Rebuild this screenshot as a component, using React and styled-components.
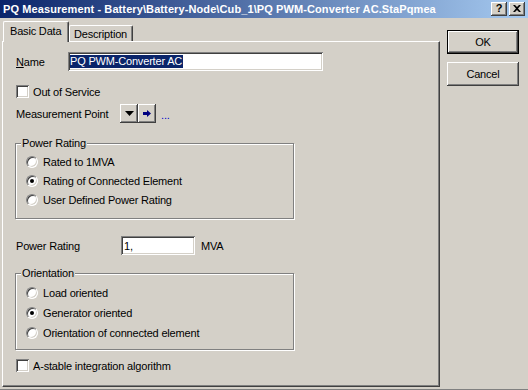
import React from "react";
import styled, { createGlobalStyle, css } from "styled-components";

const Global = createGlobalStyle`
  html, body { margin: 0; padding: 0; background: #d4d0c8; }
  body { font-family: "Liberation Sans", Arial, sans-serif; font-size: 11px; color: #000; letter-spacing: -0.18px; }
  * { box-sizing: border-box; }
`;

const raised = css`
  box-shadow: inset -1px -1px #404040, inset 1px 1px #fff, inset -2px -2px #808080, inset 2px 2px #d4d0c8;
`;
const sunken = css`
  box-shadow: inset 1px 1px #808080, inset -1px -1px #fff, inset 2px 2px #404040, inset -2px -2px #d4d0c8;
`;

const Window = styled.div`
  width: 528px;
  height: 390px;
  background: #d4d0c8;
  border-bottom: 1px solid #808080;
  display: flex;
  flex-direction: column;
  overflow: hidden;
`;

const TitleBar = styled.div`
  height: 18px;
  flex: none;
  background: linear-gradient(to right, #0a246a, #a6caf0);
  display: flex;
  align-items: center;
  justify-content: space-between;
  padding: 0 3px 0 3px;
`;

const Title = styled.span`
  color: #fff;
  font-weight: bold;
  font-size: 11px;
  white-space: nowrap;
  letter-spacing: 0.1px;
`;

const TitleButtons = styled.div`
  display: flex;
  gap: 2px;
`;

const TitleButton = styled.div`
  width: 16px;
  height: 14px;
  background: #d4d0c8;
  ${raised};
  display: flex;
  align-items: center;
  justify-content: center;
  font-weight: bold;
  font-size: 11px;
  line-height: 1;
  color: #000;
  padding-bottom: 1px;
`;

const Body = styled.div`
  flex: 1;
  display: flex;
  padding: 3px 0 0 2px;
`;

const LeftCol = styled.div`
  width: 438px;
  display: flex;
  flex-direction: column;
`;

const TabRow = styled.div`
  height: 20px;
  display: flex;
  align-items: flex-end;
  padding-left: 1px;
`;

const Tab = styled.div`
  position: relative;
  background: #d4d0c8;
  border-top: 1px solid #fff;
  border-left: 1px solid #fff;
  border-right: 1px solid #404040;
  border-top-left-radius: 2px;
  border-top-right-radius: 2px;
  box-shadow: inset -1px 0 #808080;
  display: flex;
  align-items: center;
  white-space: nowrap;
  ${(p) =>
    p.$active
      ? css`
          height: 21px;
          margin-bottom: -1px;
          z-index: 1;
          width: 66px;
          padding: 0 0 2px 6px;
        `
      : css`
          height: 16px;
          width: 64px;
          padding: 1px 0 0 4px;
        `}
`;

const Panel = styled.div`
  height: 346px;
  border-top: 1px solid #fff;
  border-left: 1px solid #fff;
  border-right: 1px solid #404040;
  border-bottom: 1px solid #404040;
  box-shadow: inset -1px -1px #808080;
  display: flex;
  flex-direction: column;
  padding: 10px 0 0 12px;
`;

const Row = styled.div`
  display: flex;
  align-items: center;
  height: ${(p) => p.$h || 14}px;
  margin-top: ${(p) => p.$mt || 0}px;
  padding-left: 1px;
`;

const Label = styled.span`
  width: ${(p) => p.$w}px;
  flex: none;
  white-space: nowrap;
`;

const Field = styled.div`
  height: 19px;
  width: ${(p) => p.$w}px;
  background: #fff;
  ${sunken};
  display: flex;
  align-items: center;
  padding-left: 2px;
  white-space: nowrap;
`;

const Selected = styled.span`
  background: #0a246a;
  color: #fff;
  line-height: 13px;
  padding: 0 1px 0 0;
`;

const FieldText = styled.span`
  padding-left: 1px;
`;

const CheckBox = styled.div`
  width: 13px;
  height: 13px;
  flex: none;
  background: #fff;
  ${sunken};
  margin-right: 4px;
`;

const SmallBtn = styled.div`
  width: 18px;
  height: 19px;
  background: #d4d0c8;
  ${raised};
  display: flex;
  align-items: center;
  justify-content: center;
`;

const Dots = styled.span`
  color: #0000cc;
  margin-left: 5px;
  padding-top: 2px;
`;

const Group = styled.div`
  position: relative;
  width: 279px;
  height: ${(p) => p.$h}px;
  margin-top: ${(p) => p.$mt}px;
  border: 1px solid #808080;
  box-shadow: inset 1px 1px 0 #fff, 1px 1px 0 #fff;
  display: flex;
  flex-direction: column;
  padding: ${(p) => p.$pt}px 0 0 10px;
  gap: ${(p) => p.$gap}px;
`;

const Legend = styled.span`
  position: absolute;
  top: -7px;
  left: 5px;
  background: #d4d0c8;
  padding: 0 1px;
  line-height: 13px;
`;

const RadioRow = styled.div`
  display: flex;
  align-items: center;
  height: 13px;
`;

const Radio = styled.div`
  width: 12px;
  height: 12px;
  flex: none;
  border-radius: 50%;
  background: #fff;
  border: 1px solid;
  border-color: #808080 #fff #fff #808080;
  box-shadow: inset 1px 1px #404040, inset -1px -1px #d4d0c8;
  margin-right: 5px;
  display: flex;
  align-items: center;
  justify-content: center;
  &::after {
    content: "";
    display: ${(p) => (p.$on ? "block" : "none")};
    width: 4px;
    height: 4px;
    border-radius: 50%;
    background: #000;
  }
`;

const Unit = styled.span`
  margin-left: 6px;
`;

const RightCol = styled.div`
  display: flex;
  flex-direction: column;
  gap: 8px;
  padding: 9px 0 0 7px;
`;

const Button = styled.div`
  width: 72px;
  height: 24px;
  background: #d4d0c8;
  display: flex;
  align-items: center;
  justify-content: center;
  ${(p) =>
    p.$default
      ? css`
          border: 1px solid #000;
          box-shadow: inset -1px -1px #404040, inset 1px 1px #fff, inset -2px -2px #808080;
        `
      : raised};
`;

const Accel = styled.span`
  text-decoration: underline;
`;

export default function App() {
  return (
    <>
      <Global />
      <Window>
        <TitleBar>
          <Title>PQ Measurement - Battery\Battery-Node\Cub_1\PQ PWM-Converter AC.StaPqmea</Title>
          <TitleButtons>
            <TitleButton>?</TitleButton>
            <TitleButton>
              <svg width="8" height="7" viewBox="0 0 8 7">
                <path d="M0 0h2l2 2 2-2h2L5 3.5 8 7H6L4 5 2 7H0l3-3.5z" fill="#000" />
              </svg>
            </TitleButton>
          </TitleButtons>
        </TitleBar>
        <Body>
          <LeftCol>
            <TabRow>
              <Tab $active>Basic Data</Tab>
              <Tab>Description</Tab>
            </TabRow>
            <Panel>
              <Row $h={19} $mt={0}>
                <Label $w={52}>
                  <Accel>N</Accel>ame
                </Label>
                <Field $w={255}>
                  <Selected>PQ PWM-Converter AC</Selected>
                </Field>
              </Row>
              <Row $h={13} $mt={14}>
                <CheckBox />
                <span>Out of Service</span>
              </Row>
              <Row $h={19} $mt={6}>
                <Label $w={104}>Measurement Point</Label>
                <SmallBtn>
                  <svg width="9" height="5" viewBox="0 0 9 5">
                    <path d="M0 0h9L4.5 5z" fill="#000" />
                  </svg>
                </SmallBtn>
                <SmallBtn>
                  <svg width="8" height="7" viewBox="0 0 8 7">
                    <path d="M0 2h4V0l4 3.5L4 7V5H0z" fill="#000080" />
                  </svg>
                </SmallBtn>
                <Dots>...</Dots>
              </Row>
              <Group $h={76} $mt={20} $pt={11} $gap={6}>
                <Legend>Power Rating</Legend>
                <RadioRow>
                  <Radio />
                  <span>Rated to 1MVA</span>
                </RadioRow>
                <RadioRow>
                  <Radio $on />
                  <span>Rating of Connected Element</span>
                </RadioRow>
                <RadioRow>
                  <Radio />
                  <span>User Defined Power Rating</span>
                </RadioRow>
              </Group>
              <Row $h={19} $mt={17}>
                <Label $w={105}>Power Rating</Label>
                <Field $w={74}>
                  <FieldText>1,</FieldText>
                </Field>
                <Unit>MVA</Unit>
              </Row>
              <Group $h={77} $mt={18} $pt={12} $gap={7}>
                <Legend>Orientation</Legend>
                <RadioRow>
                  <Radio />
                  <span>Load oriented</span>
                </RadioRow>
                <RadioRow>
                  <Radio $on />
                  <span>Generator oriented</span>
                </RadioRow>
                <RadioRow>
                  <Radio />
                  <span>Orientation of connected element</span>
                </RadioRow>
              </Group>
              <Row $h={13} $mt={9}>
                <CheckBox />
                <span>A-stable integration algorithm</span>
              </Row>
            </Panel>
          </LeftCol>
          <RightCol>
            <Button $default>OK</Button>
            <Button>Cancel</Button>
          </RightCol>
        </Body>
      </Window>
    </>
  );
}
